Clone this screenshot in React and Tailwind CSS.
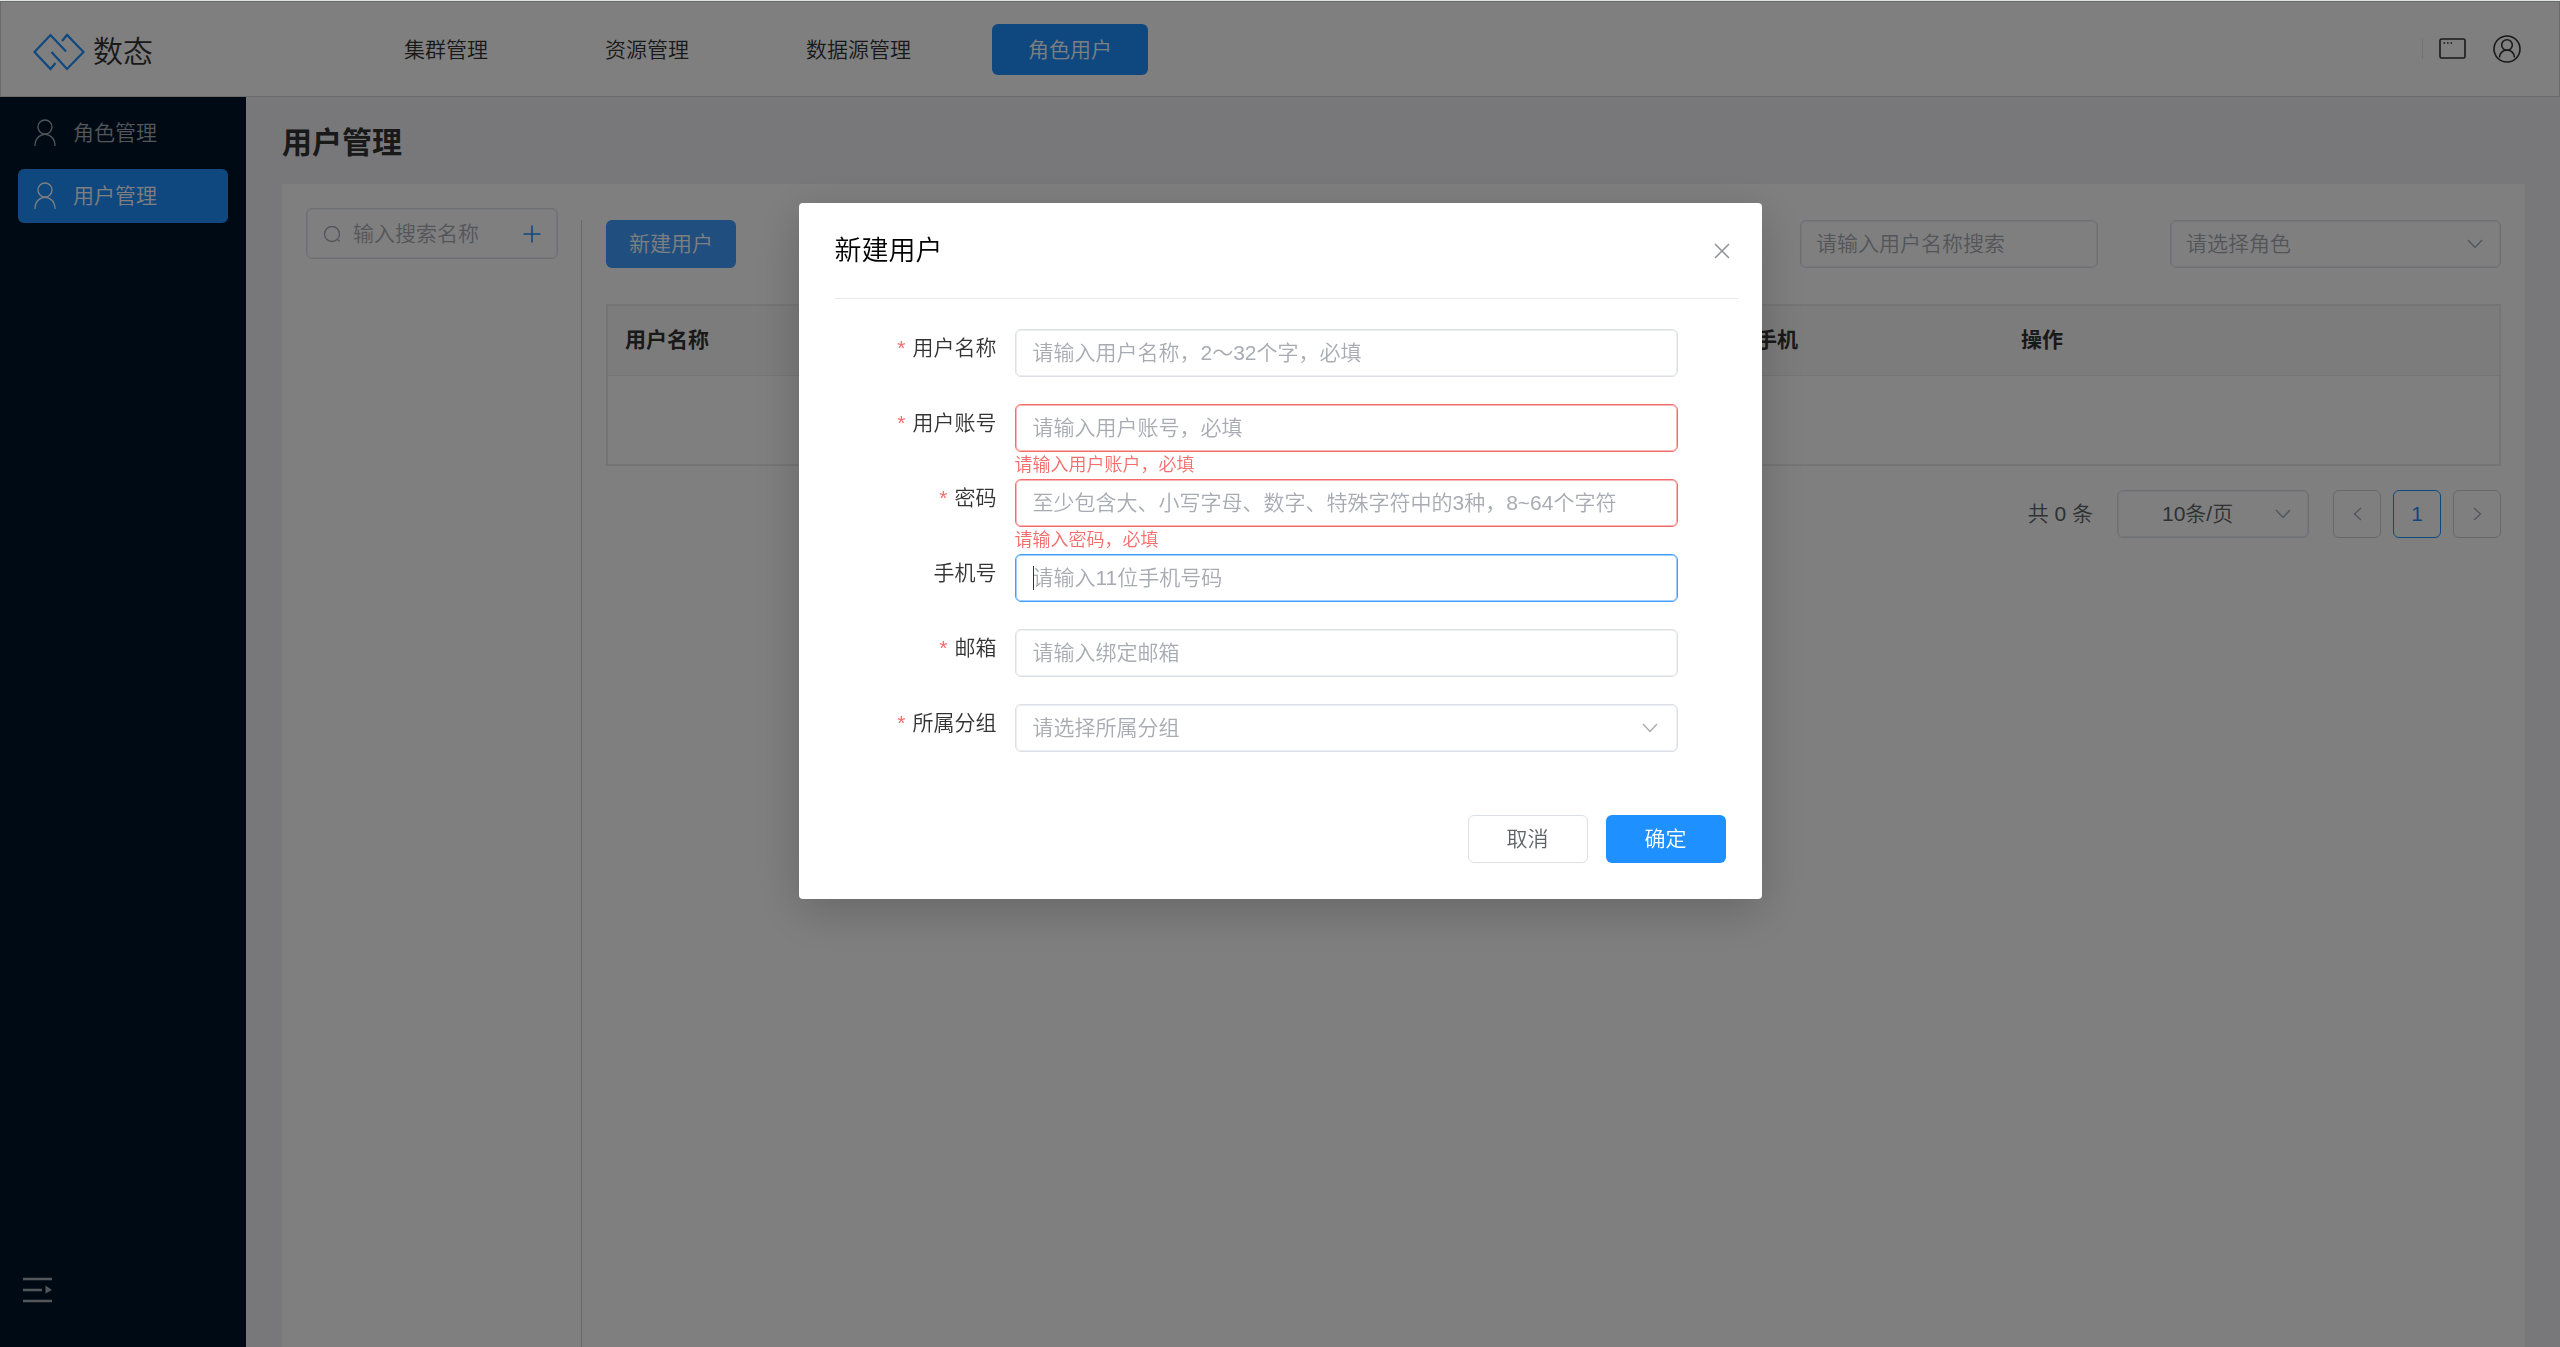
import React, { useState } from "react";

const navItems = ["集群管理", "资源管理", "数据源管理", "角色用户"];
const sideItems = ["角色管理", "用户管理"];

const fields = [
  { id: "name", label: "用户名称", placeholder: "请输入用户名称，2～32个字，必填", required: true },
  { id: "account", label: "用户账号", placeholder: "请输入用户账号，必填", required: true, error: "请输入用户账户，必填" },
  {
    id: "password",
    label: "密码",
    placeholder: "至少包含大、小写字母、数字、特殊字符中的3种，8~64个字符",
    required: true,
    error: "请输入密码，必填",
    type: "password",
  },
  { id: "phone", label: "手机号", placeholder: "请输入11位手机号码", active: true },
  { id: "email", label: "邮箱", placeholder: "请输入绑定邮箱", required: true },
  { id: "group", label: "所属分组", placeholder: "请选择所属分组", required: true, select: true },
];

const Logo = () => (
  <svg width="52" height="38" viewBox="0 0 52 38" fill="none" stroke="#1e90ff" strokeWidth="2.2">
    <path d="M33 18.5 L17.5 2 L1.5 19 L17.5 36 L22.5 30" />
    <path d="M29 8 L34 2 L50.5 19 L34 36 L18.5 19" />
  </svg>
);

const UserIcon = () => (
  <svg width="22" height="28" viewBox="0 0 22 28" fill="none" stroke="currentColor" strokeWidth="1.3" className="shrink-0">
    <circle cx="11" cy="8" r="7" />
    <path d="M1 27 C1 11.500 21 11.500 21 27" />
  </svg>
);

const Chevron = ({ className }) => (
  <svg width="16" height="10" viewBox="0 0 16 10" fill="none" stroke="#a8abb2" strokeWidth="1.4" className={className}>
    <path d="M1 1 L8 8.500 L15 1" />
  </svg>
);

const SelectBox = ({ label, id, text, wrapClass, selectClass, chevronClass }) => (
  <div className={`relative ${wrapClass}`}>
    <select
      id={id}
      aria-label={label}
      className={`h-12 w-full appearance-none rounded-md border border-[#dcdfe6] bg-white inset-ring inset-ring-[#dcdfe6]/50 ${selectClass}`}
    >
      <option>{text}</option>
    </select>
    <Chevron className={`pointer-events-none absolute top-[19px] ${chevronClass}`} />
  </div>
);

const Header = () => (
  <header className="flex h-24 items-center border border-[#d6d6d6] bg-white pl-8">
    <div className="flex w-[335px] shrink-0 items-center gap-2 pt-1.5">
      <Logo />
      <span className="text-[30px] text-[#333]">数态</span>
    </div>
    <nav className="flex gap-[45px]">
      {navItems.map((item) => (
        <a
          key={item}
          href="#"
          className={
            item === "角色用户"
              ? "flex h-[51px] items-center rounded-md bg-[#1e90ff] px-9 pt-0.5 text-white"
              : "flex h-[51px] items-center px-9 pt-0.5 text-[#333]"
          }
        >
          {item}
        </a>
      ))}
    </nav>
    <div className="ml-auto flex items-center pr-[38px] text-[#333]">
      <span className="mr-4 h-5 w-px bg-[#e4e4e4]" />
      <button aria-label="控制台" className="mr-[26px]">
        <svg width="28" height="22" viewBox="0 0 28 22" fill="none" stroke="currentColor" strokeWidth="1.6">
          <rect x="1" y="1" width="25" height="19" rx="1.500" />
          <path d="M4.500 5 h1.600 M8 5 h1.600 M11.500 5 h1.600" />
        </svg>
      </button>
      <button aria-label="个人中心">
        <svg width="28" height="28" viewBox="0 0 28 28" fill="none" stroke="currentColor" strokeWidth="1.6">
          <circle cx="14" cy="14" r="13" />
          <circle cx="14" cy="10" r="5.300" />
          <path d="M6.500 22.500 C7 12.500 21 12.500 21.500 22.500" />
        </svg>
      </button>
    </div>
  </header>
);

const Sidebar = () => (
  <aside className="flex w-[246px] shrink-0 flex-col bg-[#001529] px-[18px] pt-[9px]">
    <ul className="space-y-[9px]">
      {sideItems.map((item) => (
        <li key={item}>
          <a
            href="#"
            className={
              item === "用户管理"
                ? "flex h-[54px] items-center gap-[17px] rounded-md bg-[#1e90ff] px-4 text-white"
                : "flex h-[54px] items-center gap-[17px] px-4 text-[#a6adb4]"
            }
          >
            <UserIcon />
            {item}
          </a>
        </li>
      ))}
    </ul>
    <button aria-label="展开菜单" className="mt-auto mb-11 ml-1 w-8 text-[#a6adb4]">
      <svg width="32" height="26" viewBox="0 0 32 26" fill="none" stroke="currentColor" strokeWidth="2.500">
        <path d="M1 2 H30 M1 13 H20 M1 24 H30" />
        <path d="M23.500 8.500 L30 13 L23.500 16.500 Z" fill="currentColor" stroke="none" />
      </svg>
    </button>
  </aside>
);

const UserTable = () => (
  <table className="mt-9 w-full table-fixed border-collapse border-2 border-[#ebebeb] text-left text-[#333]">
    <thead>
      <tr className="h-[70px] border-b border-[#ebebeb] bg-[#f9f9f9]">
        <th className="px-[17px] font-bold">用户名称</th>
        <th className="w-[14%] px-[17px] font-bold">手机</th>
        <th className="w-[26.2%] px-[17px] font-bold">操作</th>
      </tr>
    </thead>
    <tbody>
      <tr className="h-[90px]">
        <td colSpan={3} />
      </tr>
    </tbody>
  </table>
);

const Pagination = () => (
  <div className="mt-6 flex items-center justify-end gap-3 text-[#606266]">
    <span className="mr-3">共 0 条</span>
    <SelectBox label="每页条数" text="10条/页" wrapClass="mr-3 w-48" selectClass="pl-11 pr-9" chevronClass="right-[18px]" />
    <button aria-label="上一页" className="flex size-12 items-center justify-center rounded-md border border-[#d0d0d0]">
      <svg width="9" height="14" viewBox="0 0 9 14" fill="none" stroke="#a8abb2" strokeWidth="1.400">
        <path d="M8 1 L1.500 7 L8 13" />
      </svg>
    </button>
    <button className="size-12 rounded-md border border-[#1e90ff] text-[#1e90ff]">1</button>
    <button aria-label="下一页" className="flex size-12 items-center justify-center rounded-md border border-[#d0d0d0]">
      <svg width="9" height="14" viewBox="0 0 9 14" fill="none" stroke="#a8abb2" strokeWidth="1.400">
        <path d="M1 1 L7.500 7 L1 13" />
      </svg>
    </button>
  </div>
);

const Content = () => (
  <main className="flex min-w-0 flex-1 flex-col bg-[#f0f0f5] pr-[35px] pl-9">
    <h1 className="flex h-[87px] items-center pt-1 text-[30px] font-bold text-[#333]">用户管理</h1>
    <section className="flex flex-1 bg-white">
      <div className="w-[299px] shrink-0 pt-6 pr-[23px] pl-6">
        <div className="flex h-[51px] items-center rounded-md border border-[#dcdfe6] px-4 inset-ring inset-ring-[#dcdfe6]/50">
          <svg width="18" height="18" viewBox="0 0 18 18" fill="none" stroke="#a8abb2" strokeWidth="1.400" className="shrink-0">
            <circle cx="9" cy="9" r="7.500" />
            <path d="M14 14 L16.500 16.500" />
          </svg>
          <input aria-label="输入搜索名称" placeholder="输入搜索名称" className="ml-3 w-0 flex-1 placeholder:text-[#a8abb2]" />
          <button aria-label="新增分组">
            <svg width="18" height="18" viewBox="0 0 18 18" stroke="#1e90ff" strokeWidth="1.600">
              <path d="M9 0.500 V17.500 M0.500 9 H17.500" />
            </svg>
          </button>
        </div>
      </div>
      <div className="mt-9 min-w-0 flex-1 border-l border-[#d0d0d0] pr-6 pl-6">
        <div className="flex items-center">
          <button className="h-12 rounded-md bg-[#409eff] px-[23px] text-white">新建用户</button>
          <input
            aria-label="请输入用户名称搜索"
            placeholder="请输入用户名称搜索"
            className="mr-[72px] ml-auto h-12 w-[298px] rounded-md border border-[#dcdfe6] px-[15px] inset-ring inset-ring-[#dcdfe6]/50 placeholder:text-[#a8abb2]"
          />
          <SelectBox label="请选择角色" text="请选择角色" wrapClass="w-[331px]" selectClass="px-[15px] text-[#a8abb2]" chevronClass="right-[18px]" />
        </div>
        <UserTable />
        <Pagination />
      </div>
    </section>
  </main>
);

const FormRow = ({ field }) => {
  const [value, setValue] = useState("");
  let border = "border-[#dcdfe6] inset-ring-[#dcdfe6]/50";
  if (field.error) border = "border-[#f56c6c] inset-ring-[#f56c6c]/50";
  if (field.active) border = "border-[#409eff] inset-ring-[#409eff]/50";

  return (
    <div className="flex">
      <label htmlFor={field.id} className="flex h-[38px] w-[180px] shrink-0 items-center justify-end gap-[7px] pr-[18px] text-[#333]">
        {field.required && <span className="text-[#f56c6c]">*</span>}
        {field.label}
      </label>
      <div className="relative h-[75px] min-w-0 flex-1">
        {field.select ? (
          <SelectBox id={field.id} text={field.placeholder} wrapClass="w-full" selectClass="px-[17px] text-[#a8abb2]" chevronClass="right-5" />
        ) : (
          <input
            id={field.id}
            type={field.type || "text"}
            value={value}
            onChange={(e) => setValue(e.target.value)}
            placeholder={field.placeholder}
            className={`block h-12 w-full rounded-md border px-[17px] inset-ring outline-none placeholder:text-[#a8abb2] ${border}`}
          />
        )}
        {field.active && <span className="absolute top-3 left-[18px] h-6 w-px bg-[#333]" />}
        {field.error && <p className="pt-1 text-lg leading-[18px] text-[#f56c6c]">{field.error}</p>}
      </div>
    </div>
  );
};

const CreateUserDialog = () => (
  <div className="fixed inset-x-0 top-px bottom-0 bg-black/50">
    <div
      role="dialog"
      aria-label="新建用户"
      className="mx-auto mt-[15vh] w-full max-w-[963px] rounded-sm bg-white pb-9 shadow-[0_12px_48px_rgba(0,0,0,0.2)]"
    >
      <div className="mr-6 ml-9 flex h-24 items-center justify-between border-b border-[#e8e8e8] pr-2">
        <h2 className="text-[27px] text-black">新建用户</h2>
        <button aria-label="关闭">
          <svg width="16" height="16" viewBox="0 0 16 16" stroke="#909399" strokeWidth="1.500">
            <path d="M1 1 L15 15 M15 1 L1 15" />
          </svg>
        </button>
      </div>
      <form className="pt-[30px] pr-[84px] pl-9">
        {fields.map((field) => (
          <FormRow key={field.id} field={field} />
        ))}
      </form>
      <div className="mt-9 flex justify-end gap-[18px] pr-9">
        <button className="h-12 w-[120px] rounded-md border border-[#dcdfe6] text-[#606266]">取消</button>
        <button className="h-12 w-[120px] rounded-md bg-[#1e90ff] text-white">确定</button>
      </div>
    </div>
  </div>
);

const App = () => {
  return (
    <div className="flex min-h-screen flex-col border-t border-[#dfe3e2] font-['Liberation_Sans','Noto_Sans_CJK_SC',sans-serif] text-[21px] leading-8 font-[350]">
      <Header />
      <div className="flex flex-1">
        <Sidebar />
        <Content />
      </div>
      <CreateUserDialog />
    </div>
  );
};

export default App;
